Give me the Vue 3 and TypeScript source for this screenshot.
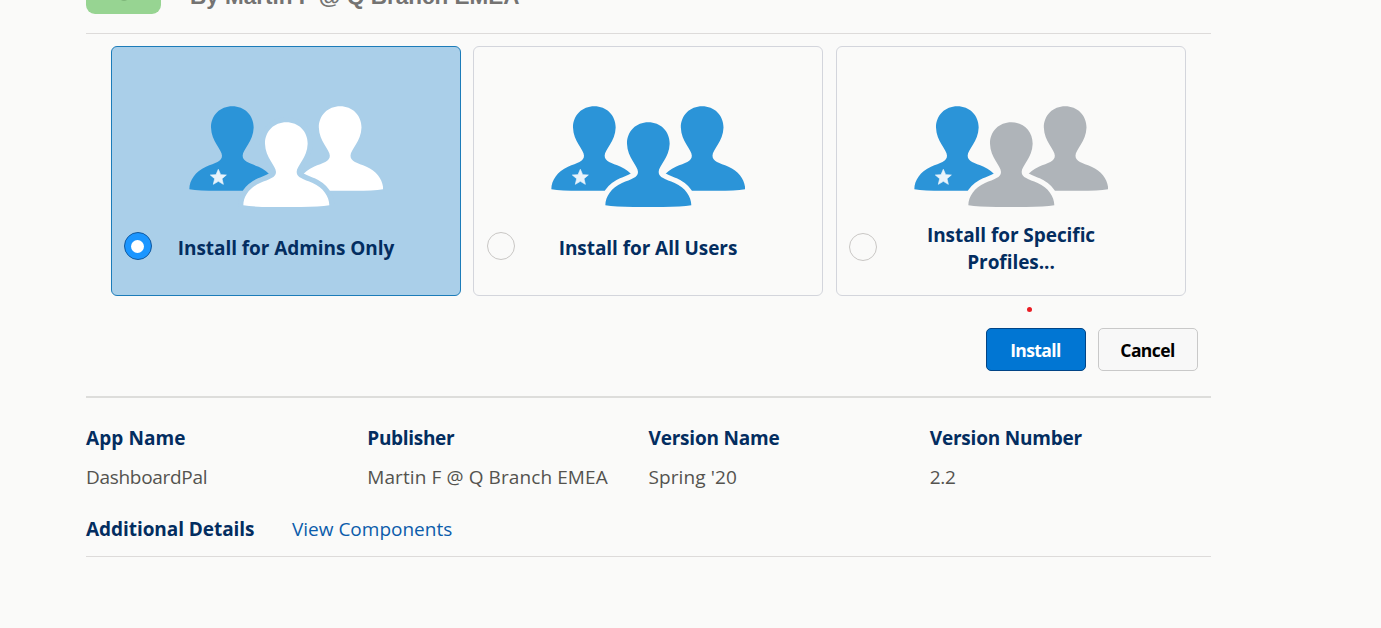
<script setup lang="ts">
import { ref } from 'vue'

interface Option {
  id: string
  label: string
  middle: string
  right: string
}

const blue = '#2b94d8'
const white = '#ffffff'
const grey = '#afb4b9'

const options: Option[] = [
  { id: 'admins', label: 'Install for Admins Only', middle: white, right: white },
  { id: 'all', label: 'Install for All Users', middle: blue, right: blue },
  { id: 'specific', label: 'Install for Specific Profiles...', middle: grey, right: grey },
]

const details = [
  { label: 'App Name', value: 'DashboardPal', key: 'app' },
  { label: 'Publisher', value: 'Martin F @ Q Branch EMEA', key: 'publisher' },
  { label: 'Version Name', value: "Spring '20", key: 'vname' },
  { label: 'Version Number', value: '2.2', key: 'vnumber' },
]

const selected = ref('admins')

const person =
  'M319 82C283 82 255 108 255 146C256 188 288 212 288 231C288 248 268 252 240 264C208 278 190 305 190 331Q220 336 275 336L363 336Q418 336 448 331C448 305 430 278 398 264C370 252 350 248 350 231C350 212 382 188 383 146C383 108 355 82 319 82Z'
</script>

<template>
  <main class="page">
    <header class="head">
      <div class="logo"><span class="logo-mark"></span></div>
      <h2 class="byline">By Martin F @ Q Branch EMEA</h2>
    </header>

    <section class="cards">
      <div
        v-for="o in options"
        :key="o.id"
        class="card"
        :class="[o.id, { active: selected === o.id }]"
        @click="selected = o.id"
      >
        <svg class="people" viewBox="27 33 582 303" width="194" height="101">
          <path :d="person" transform="translate(-162 -48.500)" :fill="blue" />
          <path :d="person" transform="translate(161.500 -48.500)" :fill="o.right" />
          <path class="gap" :d="person" />
          <path :d="person" :fill="o.middle" />
          <path
            fill="#e8f3fb"
            stroke="#e8f3fb"
            stroke-width="2"
            stroke-linejoin="round"
            d="M115 223L122 239L139 240L126 251L130 268L115 259L100 268L104 251L91 240L108 239Z"
          />
        </svg>
        <div class="choice">
          <span class="radio"><i v-if="selected === o.id"></i></span>
          <span class="choice-label">{{ o.label }}</span>
        </div>
      </div>
      <span class="marker"></span>
    </section>

    <div class="actions">
      <button class="btn primary">Install</button>
      <button class="btn">Cancel</button>
    </div>

    <section class="details">
      <div v-for="d in details" :key="d.key" class="detail" :class="d.key">
        <div class="label"><span>{{ d.label }}</span></div>
        <div class="value"><span>{{ d.value }}</span></div>
      </div>
    </section>

    <footer class="extra">
      <span class="label">Additional Details</span>
      <a class="link">View Components</a>
    </footer>
  </main>
</template>

<style>
body {
  background: #fafaf9;
  overflow: hidden;
}
</style>

<style scoped>
.page {
  box-sizing: border-box;
  width: 1381px;
  height: 628px;
  padding: 0 170px 0 86px;
  background: #fafaf9;
  overflow: hidden;
  font-family: 'Segoe UI', 'Open Sans', sans-serif;
  font-size: 19px;
  color: #54534f;
}
.head {
  box-sizing: border-box;
  height: 34px;
  display: flex;
  align-items: flex-start;
  gap: 29px;
  border-bottom: 1px solid #dddbda;
}
.logo {
  width: 75px;
  height: 75px;
  margin-top: -61px;
  border-radius: 9px;
  background: #97d492;
  display: flex;
  align-items: flex-end;
  justify-content: center;
}
.logo-mark {
  width: 12px;
  height: 14px;
  margin-bottom: 13px;
  border-radius: 50%;
  background: #7fb77b;
}
.byline {
  margin: -17px 0 0;
  font: bold 22.5px/28px 'Liberation Sans', Arial, sans-serif;
  color: #747372;
  white-space: nowrap;
}
.cards {
  position: relative;
  display: flex;
  gap: 12px;
  padding: 12px 25px 0;
}
.card {
  --bg: #fafaf9;
  box-sizing: border-box;
  width: 350px;
  height: 250px;
  border: 1px solid #d3d5dc;
  border-radius: 6px;
  background: var(--bg);
  display: flex;
  flex-direction: column;
  align-items: center;
  padding: 59px 12px 0;
}
.card.specific {
  margin-left: 1px;
}
.card.active {
  --bg: #aacfe9;
  border-color: #1c7cb9;
}
.people {
  display: block;
  flex: none;
  margin-right: 1px;
}
.gap {
  fill: none;
  stroke: var(--bg);
  stroke-width: 31;
}
.choice {
  width: 100%;
  height: 80px;
  display: grid;
  grid-template-columns: 28px 1fr 28px;
  align-items: center;
}
.radio {
  box-sizing: border-box;
  width: 28px;
  height: 28px;
  margin-top: -2px;
  border: 1px solid #c9c7c5;
  border-radius: 50%;
  display: flex;
  align-items: center;
  justify-content: center;
}
.all .radio {
  margin-left: 0.5px;
}
.specific .radio {
  margin-top: 0;
}
.active .radio {
  background: #1b96ff;
  border-color: #11599f;
}
.radio i {
  width: 13px;
  height: 13px;
  margin-right: 1px;
  border-radius: 50%;
  background: #fff;
}
.choice-label {
  justify-self: center;
  max-width: 240px;
  padding-top: 2px;
  text-align: center;
  font-weight: 700;
  line-height: 27px;
  letter-spacing: -0.06px;
  color: #032d60;
}
.specific .choice-label {
  max-width: 200px;
  padding-top: 4px;
}
.marker {
  position: absolute;
  left: 941px;
  top: 272.5px;
  width: 5px;
  height: 5px;
  border-radius: 50%;
  background: #ea1c24;
}
.actions {
  box-sizing: border-box;
  height: 102px;
  display: flex;
  justify-content: flex-end;
  gap: 12px;
  padding: 32px 13px 0 0;
  border-bottom: 2px solid #dddddb;
}
.btn {
  box-sizing: border-box;
  width: 100px;
  height: 43px;
  padding: 2px 1px 0 0;
  border: 1px solid #c9c9c9;
  border-radius: 5px;
  background: #f8f8f8;
  font: 700 17.5px/39px 'Segoe UI', 'Open Sans', sans-serif;
  letter-spacing: -0.6px;
  color: #000;
}
.btn.primary {
  background: #0176d3;
  border-color: #014486;
  color: #fff;
}
.details {
  display: grid;
  grid-template-columns: repeat(4, 281.25px);
  padding-top: 25px;
  white-space: nowrap;
}
.label {
  font-weight: 700;
  line-height: 30px;
  color: #032d60;
}
.value {
  margin-top: 9px;
  line-height: 30px;
}
.app .label {
  letter-spacing: 0.1px;
}
.app .value,
.publisher .label,
.vnumber .value {
  letter-spacing: -0.3px;
}
.publisher .value,
.vname .value {
  letter-spacing: 0.1px;
}
.vname .label,
.vnumber .label {
  letter-spacing: -0.2px;
}
.extra {
  display: flex;
  gap: 37.5px;
  height: 42px;
  margin-top: 22px;
  border-bottom: 1px solid #dddbda;
  white-space: nowrap;
}
.extra .label {
  letter-spacing: -0.06px;
}
.link {
  line-height: 30px;
  color: #0b5cab;
}
</style>
